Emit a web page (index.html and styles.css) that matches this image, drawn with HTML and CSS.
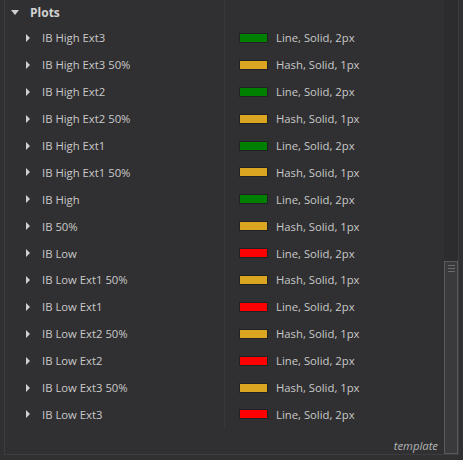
FILE: index.html
```html
<!DOCTYPE html>
<html>
<head>
<meta charset="utf-8">
<link rel="stylesheet" href="styles.css">
</head>
<body>
<div class="panel">
  <div class="main">
    <div class="list">
      <div class="row header">
        <div class="name"><span class="tri-down"></span><span class="title">Plots</span></div>
        <div class="value"></div>
      </div>
      <div class="row"><div class="name"><span class="tri"></span>IB High Ext3</div><div class="value"><span class="sw green"></span>Line, Solid, 2px</div></div>
      <div class="row"><div class="name"><span class="tri"></span>IB High Ext3 50%</div><div class="value"><span class="sw gold"></span>Hash, Solid, 1px</div></div>
      <div class="row"><div class="name"><span class="tri"></span>IB High Ext2</div><div class="value"><span class="sw green"></span>Line, Solid, 2px</div></div>
      <div class="row"><div class="name"><span class="tri"></span>IB High Ext2 50%</div><div class="value"><span class="sw gold"></span>Hash, Solid, 1px</div></div>
      <div class="row"><div class="name"><span class="tri"></span>IB High Ext1</div><div class="value"><span class="sw green"></span>Line, Solid, 2px</div></div>
      <div class="row"><div class="name"><span class="tri"></span>IB High Ext1 50%</div><div class="value"><span class="sw gold"></span>Hash, Solid, 1px</div></div>
      <div class="row"><div class="name"><span class="tri"></span>IB High</div><div class="value"><span class="sw green"></span>Line, Solid, 2px</div></div>
      <div class="row"><div class="name"><span class="tri"></span>IB 50%</div><div class="value"><span class="sw gold"></span>Hash, Solid, 1px</div></div>
      <div class="row"><div class="name"><span class="tri"></span>IB Low</div><div class="value"><span class="sw red"></span>Line, Solid, 2px</div></div>
      <div class="row"><div class="name"><span class="tri"></span>IB Low Ext1 50%</div><div class="value"><span class="sw gold"></span>Hash, Solid, 1px</div></div>
      <div class="row"><div class="name"><span class="tri"></span>IB Low Ext1</div><div class="value"><span class="sw red"></span>Line, Solid, 2px</div></div>
      <div class="row"><div class="name"><span class="tri"></span>IB Low Ext2 50%</div><div class="value"><span class="sw gold"></span>Hash, Solid, 1px</div></div>
      <div class="row"><div class="name"><span class="tri"></span>IB Low Ext2</div><div class="value"><span class="sw red"></span>Line, Solid, 2px</div></div>
      <div class="row"><div class="name"><span class="tri"></span>IB Low Ext3 50%</div><div class="value"><span class="sw gold"></span>Hash, Solid, 1px</div></div>
      <div class="row"><div class="name"><span class="tri"></span>IB Low Ext3</div><div class="value"><span class="sw red"></span>Line, Solid, 2px</div></div>
    </div>
    <div class="footer">template</div>
  </div>
  <div class="scrollbar">
    <div class="track"></div>
    <div class="thumb">
      <div class="grip"></div>
      <div class="grip"></div>
      <div class="grip"></div>
    </div>
  </div>
</div>
</body>
</html>
```

FILE: styles.css
```css
html, body {
  margin: 0;
  padding: 0;
  background: #303032;
}
body {
  width: 463px;
  height: 460px;
  overflow: hidden;
  font-family: "Open Sans", "Noto Sans", sans-serif;
  font-size: 11.3px;
  color: #c9c9c9;
}
.panel {
  margin-left: 4px;
  width: 455px;
  height: 455px;
  border-left: 1px solid #3d3d40;
  border-bottom: 1px solid #3d3d40;
  border-right: 1px solid #3d3d40;
  box-sizing: border-box;
  display: flex;
}
.main {
  flex: 1;
  display: flex;
  flex-direction: column;
}
.list {
  display: flex;
  flex-direction: column;
}
.row {
  display: grid;
  grid-template-columns: 219px 1fr;
  height: 26.9px;
}
.row.header {
  height: 24.5px;
}
.name {
  display: flex;
  align-items: center;
  padding-left: 21px;
  white-space: nowrap;
}
.header .name {
  padding-left: 6px;
}
.value {
  display: flex;
  align-items: center;
  border-left: 1px solid #38383b;
  padding-left: 14px;
  white-space: nowrap;
}
.tri {
  width: 0;
  height: 0;
  border-top: 4px solid transparent;
  border-bottom: 4px solid transparent;
  border-left: 4px solid #d0d0d0;
  margin-right: 12px;
}
.tri-down {
  width: 0;
  height: 0;
  border-left: 4.5px solid transparent;
  border-right: 4.5px solid transparent;
  border-top: 5px solid #d0d0d0;
  margin-right: 11px;
}
.title {
  font-weight: bold;
  font-size: 12px;
  color: #d2d2d2;
}
.sw {
  width: 27px;
  height: 8px;
  border: 1px solid #222224;
  margin-right: 8px;
}
.green { background: #008000; }
.gold { background: #daa520; }
.red { background: #ff0000; }
.footer {
  flex: 1;
  display: flex;
  align-items: center;
  justify-content: flex-end;
  padding-right: 6px;
  padding-top: 10px;
  font-style: italic;
  color: #b4b4b4;
}
.scrollbar {
  width: 14px;
  display: flex;
  flex-direction: column;
  background: #2c2c2e;
}
.track {
  flex: 1;
}
.thumb {
  height: 193px;
  box-sizing: border-box;
  border: 1px solid #5a5a5c;
  background: #3a3a3c;
  display: flex;
  flex-direction: column;
  align-items: center;
  gap: 2px;
  padding-top: 3px;
}
.grip {
  width: 7px;
  height: 1px;
  background: #6a6a6c;
}
```
